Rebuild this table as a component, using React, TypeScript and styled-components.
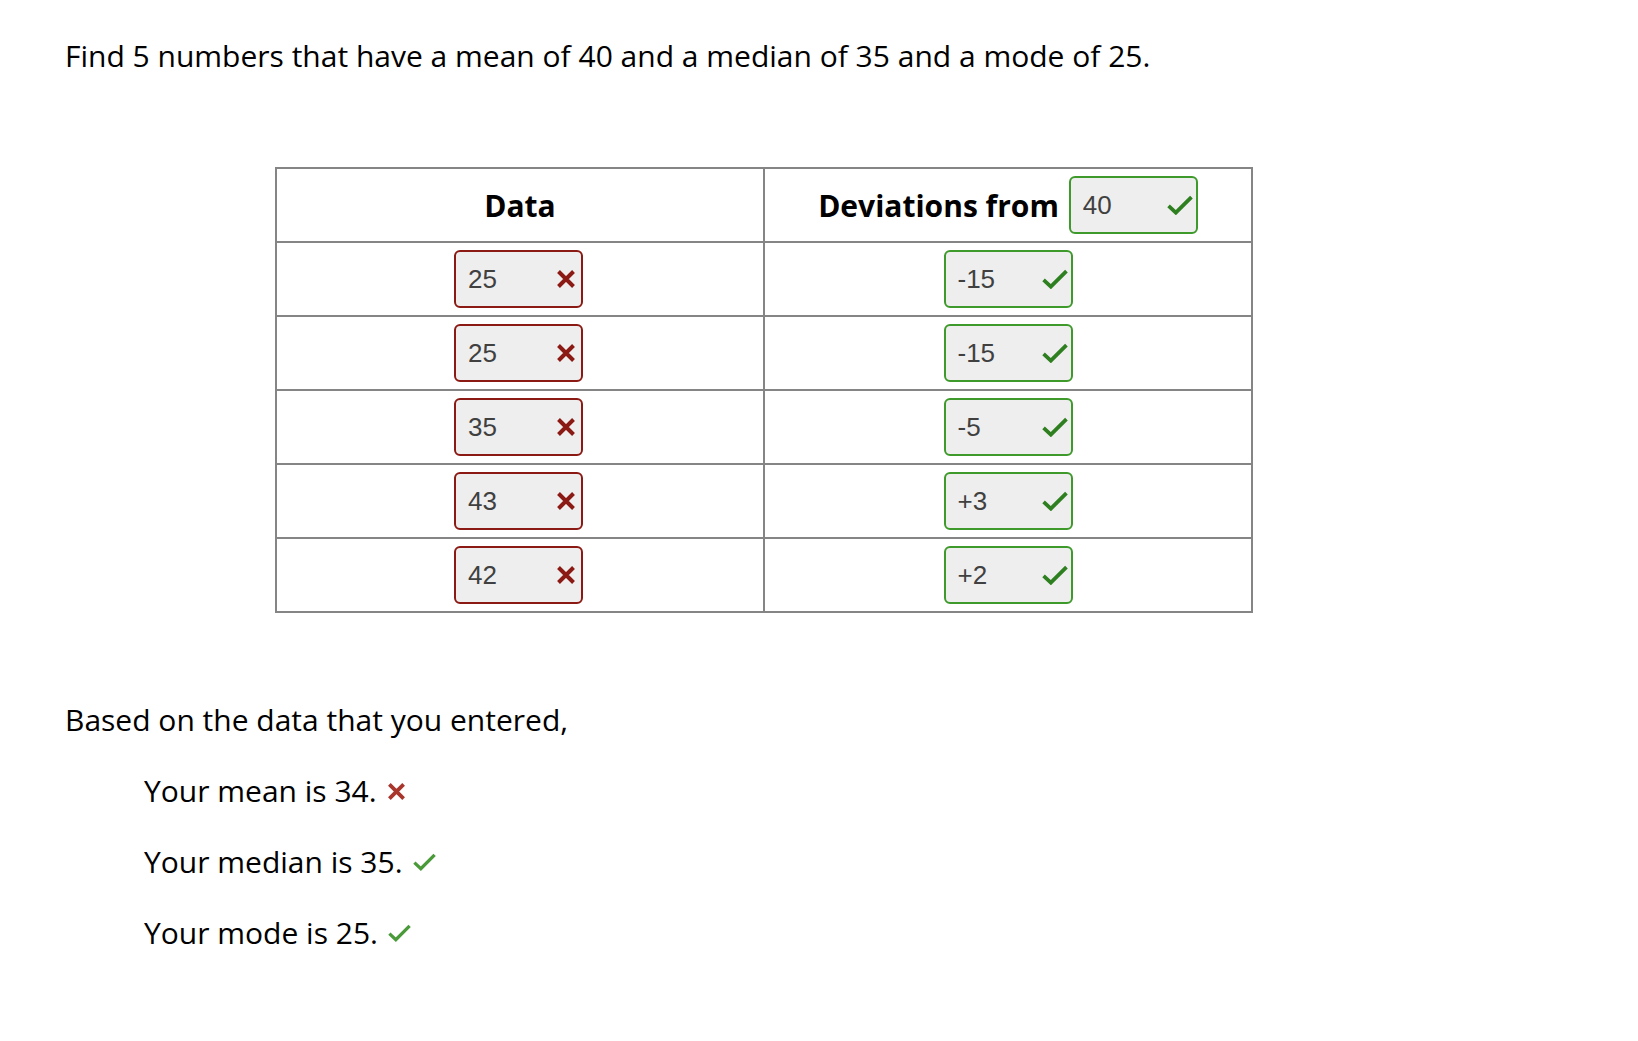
import React from 'react';
import styled, { createGlobalStyle } from 'styled-components';

const GlobalStyle = createGlobalStyle`
  html, body {
    margin: 0;
    padding: 0;
    background: #ffffff;
  }
  body {
    font-family: "Open Sans", "Noto Sans", sans-serif;
    color: #000;
  }
`;

const Page = styled.div`
  padding: 36px 0 60px 65px;
`;

const Prompt = styled.p`
  margin: 0;
  font-size: 30px;
  line-height: 40px;
`;

const Table = styled.table`
  margin: 91px 0 0 210px;
  width: 978px;
  border-collapse: collapse;
  table-layout: fixed;
`;

const Cell = styled.td`
  border: 2px solid #858585;
  height: 72px;
  padding: 0;
  text-align: center;
  vertical-align: middle;
`;

const HeadCell = styled(Cell).attrs({ as: 'th' })`
  font-size: 30px;
  font-weight: 700;
`;

const HeadInner = styled.div`
  display: flex;
  align-items: center;
  justify-content: center;
  gap: 10px;
`;

const Field = styled.div<{ ok: boolean }>`
  display: inline-flex;
  align-items: center;
  justify-content: space-between;
  box-sizing: border-box;
  width: 129px;
  height: 58px;
  padding: 0 ${p => (p.ok ? '3px' : '5px')} 0 12px;
  margin-left: ${p => (p.ok ? '0' : '-3px')};
  background: #eeeeee;
  border: 2px solid ${p => (p.ok ? '#3f9a2c' : '#8c1a14')};
  border-radius: 6px;
  font-family: "Liberation Sans", Arial, sans-serif;
  font-size: 26px;
  font-weight: 400;
  color: #404040;
  text-align: left;
`;

const Summary = styled.div`
  margin-top: 87px;
`;

const Lead = styled.p`
  margin: 0;
  font-size: 30px;
  line-height: 40px;
`;

const ResultList = styled.div`
  display: flex;
  flex-direction: column;
  gap: 31px;
  margin: 31px 0 0 79px;
`;

const Result = styled.div`
  display: flex;
  align-items: center;
  gap: 10px;
  font-size: 30px;
  line-height: 40px;
`;

const Cross = ({ size = 20, color = '#8c1a14' }: { size?: number; color?: string }) => (
  <svg width={size} height={size} viewBox="0 0 20 20">
    <path d="M2.5 2.5 L17.5 17.5 M17.5 2.5 L2.5 17.5" stroke={color} strokeWidth="4" strokeLinecap="butt" fill="none" />
  </svg>
);

const Check = ({ width = 26, color = '#2e7f1f' }: { width?: number; color?: string }) => (
  <svg width={width} height={width * 0.8} viewBox="0 0 25 20">
    <path d="M1.5 10.5 L8.5 17 L23.5 2" stroke={color} strokeWidth="3.6" strokeLinejoin="miter" fill="none" />
  </svg>
);

const data = ['25', '25', '35', '43', '42'];
const deviations = ['-15', '-15', '-5', '+3', '+2'];

export default function App() {
  return (
    <Page>
      <GlobalStyle />
      <Prompt>Find 5 numbers that have a mean of 40 and a median of 35 and a mode of 25.</Prompt>
      <Table>
        <thead>
          <tr>
            <HeadCell>Data</HeadCell>
            <HeadCell>
              <HeadInner>
                <span>Deviations from</span>
                <Field ok>
                  <span>40</span>
                  <Check />
                </Field>
              </HeadInner>
            </HeadCell>
          </tr>
        </thead>
        <tbody>
          {data.map((value, i) => (
            <tr key={i}>
              <Cell>
                <Field ok={false}>
                  <span>{value}</span>
                  <Cross />
                </Field>
              </Cell>
              <Cell>
                <Field ok>
                  <span>{deviations[i]}</span>
                  <Check />
                </Field>
              </Cell>
            </tr>
          ))}
        </tbody>
      </Table>
      <Summary>
        <Lead>Based on the data that you entered,</Lead>
        <ResultList>
          <Result>
            Your mean is 34.
            <Cross size={19} color="#a8362c" />
          </Result>
          <Result>
            Your median is 35.
            <Check width={23} color="#4a9a3a" />
          </Result>
          <Result>
            Your mode is 25.
            <Check width={23} color="#4a9a3a" />
          </Result>
        </ResultList>
      </Summary>
    </Page>
  );
}
